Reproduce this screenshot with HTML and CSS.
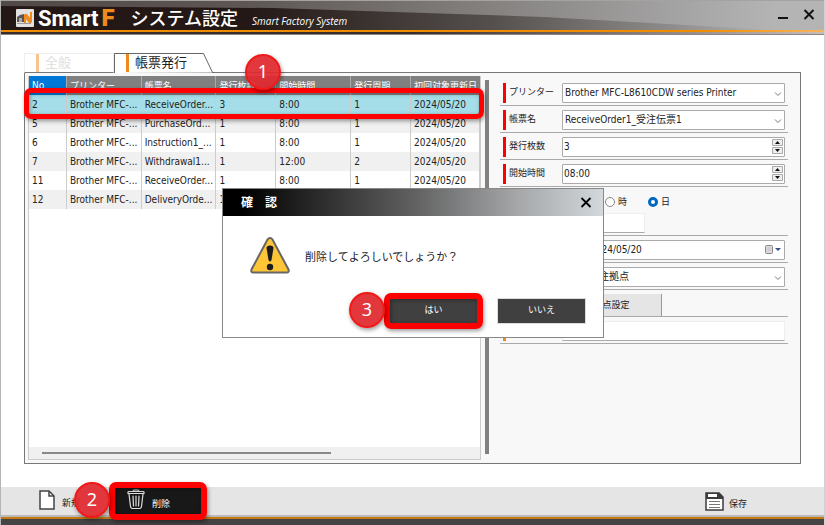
FILE: index.html
```html
<!DOCTYPE html>
<html lang="ja">
<head>
<meta charset="utf-8">
<title>システム設定</title>
<link rel="stylesheet" href="styles.css">
</head>
<body>
<div class="window">
  <header class="titlebar">
    <svg class="logo" viewBox="0 0 18 18" aria-hidden="true">
      <rect width="18" height="18" rx="1" fill="#e4e2e1"/>
      <path d="M1 13V8l3-2 4-1v8z" fill="#5b5655"/>
      <path d="M3 9h3v4H3z" fill="#aaa6a4"/>
      <path d="M8 14V6q1-2 3-1l3 4V3h2v10q-1 2-3 1l-3-4v4z" fill="#f08a1c"/>
      <path d="M1 14h14v1H1z" fill="#a09c9a"/>
    </svg>
    <span class="brand">Smart<b>F</b></span>
    <h1>システム設定</h1>
    <span class="tagline">Smart Factory System</span>
    <button class="winbtn" type="button" aria-label="最小化"><svg viewBox="0 0 12 12"><path d="M1 9h10" stroke="#111" stroke-width="2"/></svg></button>
    <button class="winbtn" type="button" aria-label="閉じる"><svg viewBox="0 0 12 12"><path d="M1.500 1l9 9M10.500 1l-9 9" stroke="#111" stroke-width="2" fill="none"/></svg></button>
  </header>

  <main class="content">
    <nav class="tabs">
      <button class="tab tab-idle" type="button"><i></i>全般</button>
      <button class="tab tab-active" type="button">
        <svg viewBox="0 0 100 20" aria-hidden="true"><path d="M.5 20V.5H89.500L98.500 19.500H100" fill="#fff" stroke="#666"/></svg>
        <i></i><span>帳票発行</span>
      </button>
    </nav>

    <div class="panel">
      <section class="list">
        <table>
          <colgroup><col class="c1"><col class="c2"><col class="c3"><col class="c4"><col class="c5"><col class="c6"><col class="c7"></colgroup>
          <thead><tr><th class="sorted">No</th><th>プリンター</th><th>帳票名</th><th>発行枚数</th><th>開始時間</th><th>発行周期</th><th>初回対象更新日</th></tr></thead>
          <tbody>
            <tr class="selected"><td>2</td><td>Brother MFC-...</td><td>ReceiveOrder...</td><td>3</td><td>8:00</td><td>1</td><td>2024/05/20</td></tr>
            <tr><td>5</td><td>Brother MFC-...</td><td>PurchaseOrd...</td><td>1</td><td>8:00</td><td>1</td><td>2024/05/20</td></tr>
            <tr><td>6</td><td>Brother MFC-...</td><td>Instruction1_...</td><td>1</td><td>8:00</td><td>1</td><td>2024/05/20</td></tr>
            <tr><td>7</td><td>Brother MFC-...</td><td>Withdrawal1...</td><td>1</td><td>12:00</td><td>2</td><td>2024/05/20</td></tr>
            <tr><td>11</td><td>Brother MFC-...</td><td>ReceiveOrder...</td><td>1</td><td>8:00</td><td>1</td><td>2024/05/20</td></tr>
            <tr><td>12</td><td>Brother MFC-...</td><td>DeliveryOrde...</td><td>1</td><td></td><td></td><td></td></tr>
          </tbody>
        </table>
        <div class="scroll"><span></span></div>
        <div class="mark mark-row"></div>
        <span class="step step-one">1</span>
      </section>
      <div class="splitter"></div>
      <form class="form">
        <div class="row required">
          <label for="printer">プリンター</label>
          <span class="field"><select id="printer"><option>Brother MFC-L8610CDW series Printer</option></select><svg class="chev" viewBox="0 0 8 8"><path d="M1 2.500l3 3 3-3" fill="none" stroke="#777"/></svg></span>
        </div>
        <div class="row required">
          <label for="report">帳票名</label>
          <span class="field"><select id="report"><option>ReceiveOrder1_受注伝票1</option></select><svg class="chev" viewBox="0 0 8 8"><path d="M1 2.500l3 3 3-3" fill="none" stroke="#777"/></svg></span>
        </div>
        <div class="row required">
          <label for="copies">発行枚数</label>
          <span class="field"><input id="copies" type="text" value="3"><svg class="spin" viewBox="0 0 11 15"><path d="M.5.5h10v6H.5zM.5 8.500h10v6H.5z" fill="#eee" stroke="#aaa"/><path d="M5.500 2l2.500 3h-5zM5.500 13l2.500-3h-5z" fill="#111"/></svg></span>
        </div>
        <div class="row required">
          <label for="start">開始時間</label>
          <span class="field"><input id="start" type="text" value="08:00"><svg class="spin" viewBox="0 0 11 15"><path d="M.5.5h10v6H.5zM.5 8.500h10v6H.5z" fill="#eee" stroke="#aaa"/><path d="M5.500 2l2.500 3h-5zM5.500 13l2.500-3h-5z" fill="#111"/></svg></span>
        </div>
        <div class="row cycle">
          <div class="radios">
            <label><input type="radio" name="unit">時</label>
            <label><input type="radio" name="unit" checked>日</label>
          </div>
          <input class="flat" type="text" aria-label="発行周期">
        </div>
        <div class="row">
          <span class="field inset"><input type="text" value="2024/05/20" aria-label="初回対象更新日"><svg class="cal" viewBox="0 0 16 9"><rect x=".5" y=".5" width="7" height="8" rx="1" fill="#dcdce0" stroke="#8a8488"/><path d="M2 3h4M2 5h4" stroke="#c4c0c8"/><path d="M10 3h6l-3 3z" fill="#34508a"/></svg></span>
        </div>
        <div class="row">
          <span class="field inset"><select aria-label="拠点"><option>受注拠点</option></select><svg class="chev" viewBox="0 0 8 8"><path d="M1 2.500l3 3 3-3" fill="none" stroke="#777"/></svg></span>
        </div>
        <div class="row">
          <button class="site" type="button">拠点設定</button>
        </div>
        <div class="row optional">
          <input class="flat wide" type="text" aria-label="備考">
        </div>
      </form>
    </div>
  </main>

  <footer class="toolbar">
    <button class="tool tool-new" type="button">
      <svg viewBox="0 0 16 20"><path d="M1 1h9l5 5v13H1z" fill="#fff" stroke="#444" stroke-width="1.500"/><path d="M10 1v5h5" fill="none" stroke="#444" stroke-width="1.500"/></svg>新規
    </button>
    <div class="tool-wrap">
      <button class="tool tool-delete" type="button">
        <svg viewBox="0 0 18 21"><path d="M1 4.500h16v-1q0-1-1-1H2q-1 0-1 1zM6 2.500q0-1.500 1.500-1.500h3Q12 1 12 2.500M2 5l1.500 12.500q.3 2 2 2h7q1.700 0 2-2L16 5" fill="none" stroke="#ddd" stroke-width="1.200"/><path d="M6 7l.5 10M9 7v10M12 7l-.5 10" stroke="#ddd" stroke-width="1.200" stroke-linecap="round"/></svg>削除
      </button>
      <div class="mark"></div>
      <span class="step">2</span>
    </div>
    <button class="tool tool-save" type="button">
      <svg viewBox="0 0 19 19"><path d="M1 1h13l4 4v13H1z" fill="#fff" stroke="#3b3b3b" stroke-width="1.500"/><path d="M1 7V1h13l4 4v2z" fill="#3b3b3b"/><path d="M3 2h9v3H3z" fill="#fff"/><path d="M4 9.500h11M4 12.500h11M4 15.500h11" stroke="#777"/></svg>保存
    </button>
  </footer>

  <section class="dialog" role="dialog" aria-labelledby="dlg-title">
    <header><h2 id="dlg-title">確　認</h2>
      <button class="winbtn" type="button" aria-label="閉じる"><svg viewBox="0 0 12 12"><path d="M1.500 1l9 9M10.500 1l-9 9" stroke="#000" stroke-width="1.800" fill="none"/></svg></button></header>
    <div class="message">
      <svg viewBox="0 0 40 38" aria-hidden="true"><path d="M20 2q1.500 0 2.500 1.500l16 30q1 3-2 3h-33q-3 0-2-3l16-30Q18.500 2 20 2z" fill="#fec636" stroke="#666" stroke-width="2"/><path d="M16.500 12q0-2.500 3.500-2.500t3.500 2.500L21.500 24q-1.500 3-3 0z" fill="#1c1c1c"/><circle cx="20" cy="31" r="3.200" fill="#1c1c1c"/></svg>
      <p>削除してよろしいでしょうか？</p>
    </div>
    <div class="actions">
      <div class="yes"><button type="button">はい</button><div class="mark"></div><span class="step">3</span></div>
      <button type="button">いいえ</button>
    </div>
  </section>
</div>
</body>
</html>
```
FILE: styles.css
```css
* { box-sizing: border-box; }
body {
  margin: 0;
  font: 10px/12px "DejaVu Sans Condensed", "Noto Sans CJK JP", sans-serif;
  color: #222;
}
button, input, select { font: inherit; color: inherit; margin: 0; padding: 0; border: 0; border-radius: 0; background: none; }
h1, h2, p { margin: 0; }
svg { display: block; }

.window {
  position: relative;
  min-height: 100vh;
  display: flex;
  flex-direction: column;
  background: #fff;
  border-left: 1px solid #b5b5b5;
  border-right: 1px solid #d0d0d0;
}

.titlebar {
  position: relative;
  isolation: isolate;
  height: 35px;
  padding: 0 9px 5px 15px;
  display: flex;
  align-items: center;
  color: #fff;
  background:
    linear-gradient(#8b8584, #8b8584) 0 34px / 100% 1px no-repeat,
    linear-gradient(90deg, #3a2c2a 50%, #c8bdb8) 0 32px / 100% 2px no-repeat,
    linear-gradient(90deg, #f08c00 85%, #f6b560) 0 30px / 100% 2px no-repeat,
    linear-gradient(90deg, #231815 30%, #55504e 60%, #8a8887 80%, #b2b2b2 94%);
}
.titlebar::before {
  content: "";
  position: absolute;
  z-index: -1;
  inset: 0 0 5px;
  border-top: 1px solid #a5a3a2;
  background: linear-gradient(90deg, #514946, #5d5654 30%, #858280 60%, #a4a3a3 82%, #b4b4b4 94%);
  clip-path: polygon(0 0, 100% 0, 100% 100%, 94% 100%, 66% 17px, 33% 8px, 0 6px);
}
.logo { width: 18px; height: 18px; margin-top: 6px; }
.brand { margin: 6px 0 0 4px; font: 700 22px/24px Roboto, sans-serif; }
.brand b { color: #f08a1c; margin-left: 3px; font-size: 24px; }
.titlebar h1 { margin: 4px 0 0 16px; font: 500 18px/24px "Noto Sans CJK JP", sans-serif; }
.tagline { margin: 12px auto 0 14px; font: italic 10px/12px "Open Sans", sans-serif; }
.winbtn { width: 12px; height: 12px; }
.winbtn svg { width: 12px; height: 12px; }
.titlebar .winbtn + .winbtn { margin-left: 14px; }

.content { flex: 1; display: flex; flex-direction: column; padding: 18px 23px 23px; }
.tabs { display: flex; height: 20px; margin-bottom: -1px; z-index: 1; }
.tab { position: relative; display: flex; align-items: center; font-size: 13px; line-height: 18px; text-align: left; }
.tab i { width: 3px; height: 18px; background: #f08a1c; }
.tab-idle { width: 90px; padding-left: 11px; gap: 6px; color: #ddd; border: 1px solid #eee; border-bottom-color: #777; }
.tab-idle i { opacity: .5; }
.tab-active { width: 100px; padding-left: 12px; gap: 6px; }
.tab-active svg { position: absolute; inset: 0; width: 100px; height: 20px; }
.tab-active i, .tab-active span { position: relative; }

.panel {
  flex: 1;
  display: grid;
  grid-template-columns: minmax(0, 453fr) 4px minmax(0, 307fr);
  column-gap: 4px;
  border: 1px solid #777;
  background: #f8f8f8;
  padding: 3px 0 3px 3px;
}
.list { position: relative; background: #fff; border: 1px solid #ccc; border-top: 0; display: flex; flex-direction: column; justify-content: space-between; }
table { width: 100%; table-layout: fixed; border-collapse: collapse; }
.c1 { width: 8.3%; } .c2 { width: 16.6%; } .c3 { width: 16.6%; } .c4 { width: 13.3%; }
.c5 { width: 16.6%; } .c6 { width: 13.3%; } .c7 { width: 15.3%; }
th, td { height: 19px; padding: 0 0 0 3px; text-align: left; white-space: nowrap; overflow: hidden; border-right: 1px solid #ccc; font-weight: 400; }
th { background: #808080; color: #fff; font-size: 9px; border-color: #aaa; }
th.sorted { background: #0078d7; font-size: 10px; }
th:last-child { border-right: 0; }
tbody tr:nth-child(even) { background: #f0f0f0; }
tbody tr.selected { background: #a5dee8; }
.scroll { height: 12px; padding: 5px 13px; background: #f0f0f0; }
.scroll span { display: block; width: 68%; height: 2px; background: #888; }
.splitter { background: #808080; margin: 4px 0 6px; }

.mark { position: absolute; inset: -6px; border: 6px solid #f00; border-radius: 7px; box-shadow: 1px 2px 4px #0006, inset 1px 1px 4px #0005; pointer-events: none; }
.mark-row { inset: 12px -4px auto -5px; height: 31px; border-width: 5px; }
.step {
  position: absolute;
  width: 36px; height: 36px;
  border: 2px solid #f01818;
  border-radius: 50%;
  background: #e02a2fee;
  box-shadow: 1px 2px 4px #0006;
  color: #fff;
  font: 18px/30px "Noto Sans", sans-serif;
  text-align: center;
}
.step-one { left: 216px; top: -22px; z-index: 2; }

.form { padding: 3px 12px 0 7px; }
.row {
  display: grid;
  grid-template-columns: 59px minmax(0, 1fr);
  align-items: center;
  min-height: 27px;
  padding: 4px 3px 2px;
  border-bottom: 1px solid #aaa;
}
.row > :only-child { grid-column: 2; }
.row > label { height: 20px; padding-left: 3px; border-left: 3px solid #f00; font-size: 9px; line-height: 18px; }
.field { position: relative; display: block; height: 20px; }
.field input, .field select { display: block; appearance: none; width: 100%; height: 20px; padding: 0 2px 1px; border: 1px solid #aaa; border-radius: 1px; background: #fff; }
.field input { padding-left: 1px; }
.inset { margin-left: 24px; }
.inset input { padding-left: 3px; }
.chev { position: absolute; right: 3px; top: 7px; width: 8px; height: 8px; }
.spin { position: absolute; right: 2px; top: 2px; width: 11px; height: 15px; }
.cal { position: absolute; right: 4px; top: 5px; width: 16px; height: 9px; }
.cycle { padding-top: 9px; row-gap: 5px; }
.cycle > * { grid-column: 2; }
.radios { display: flex; gap: 21px; padding-left: 43px; font-size: 9px; }
.radios label { display: flex; align-items: center; gap: 3px; }
.radios input { appearance: none; width: 10px; height: 10px; border: 1px solid #888; border-radius: 50%; background: #fff; }
.radios input:checked { border: 3px solid #0067c0; }
.flat { width: 83px; height: 20px; background: #fff; border: 1px solid #eee; border-bottom-color: #aaa; }
.flat.wide { width: 100%; }
.site { width: 100px; height: 22px; margin: -1px 0 -2px; background: #e5e5e5; border-right: 1px solid #999; font-size: 9px; }
.optional { background: linear-gradient(#f08a1c, #f08a1c) 3px 4px / 3px 20px no-repeat; }

.toolbar { height: 38px; padding: 0 77px 10px 38px; display: flex; align-items: center; background: linear-gradient(#e5e5e5 28px, #bbb 28px 30px, #c77a12 30px 32px, #444 32px); }
.tool { display: flex; align-items: flex-end; gap: 7px; font-size: 9px; line-height: 14px; }
.tool-new { padding-bottom: 2px; }
.tool-new svg { width: 16px; height: 20px; }
.tool-wrap { position: relative; margin-left: 35px; }
.tool-delete { width: 86px; height: 26px; padding: 0 0 3px 12px; background: #181818; color: #fff; outline: 1px solid #aaa; }
.tool-delete svg { width: 18px; height: 21px; margin-bottom: 1px; }
.tool-wrap .step { left: -41px; top: -6px; }
.tool-save { margin-left: auto; gap: 5px; }
.tool-save svg { width: 19px; height: 19px; }

.dialog { position: absolute; left: 221px; top: 188px; width: 382px; height: 150px; background: #fff; border: 1px solid #888; z-index: 3; display: flex; flex-direction: column; }
.dialog header { height: 27px; padding: 0 11px 0 18px; display: flex; align-items: center; justify-content: space-between; background: linear-gradient(90deg, #000 5%, #606060 50%, #a6a8aa 78%, #d2d8dc); color: #fff; }
.dialog h2 { font-size: 12px; line-height: 18px; }
.message { display: flex; align-items: center; gap: 15px; padding: 20px 0 0 27px; font-size: 11px; line-height: 16px; }
.message svg { width: 40px; height: 38px; }
.message p { padding-top: 6px; }
.actions { display: flex; justify-content: flex-end; gap: 21px; padding: 25px 18px 0 0; }
.actions button { display: block; width: 87px; height: 24px; padding-bottom: 2px; background: #404040; color: #fff; font-size: 9px; outline: 1px solid #ddd; }
.yes { position: relative; }
.yes .step { left: -41px; top: -7px; }
```
